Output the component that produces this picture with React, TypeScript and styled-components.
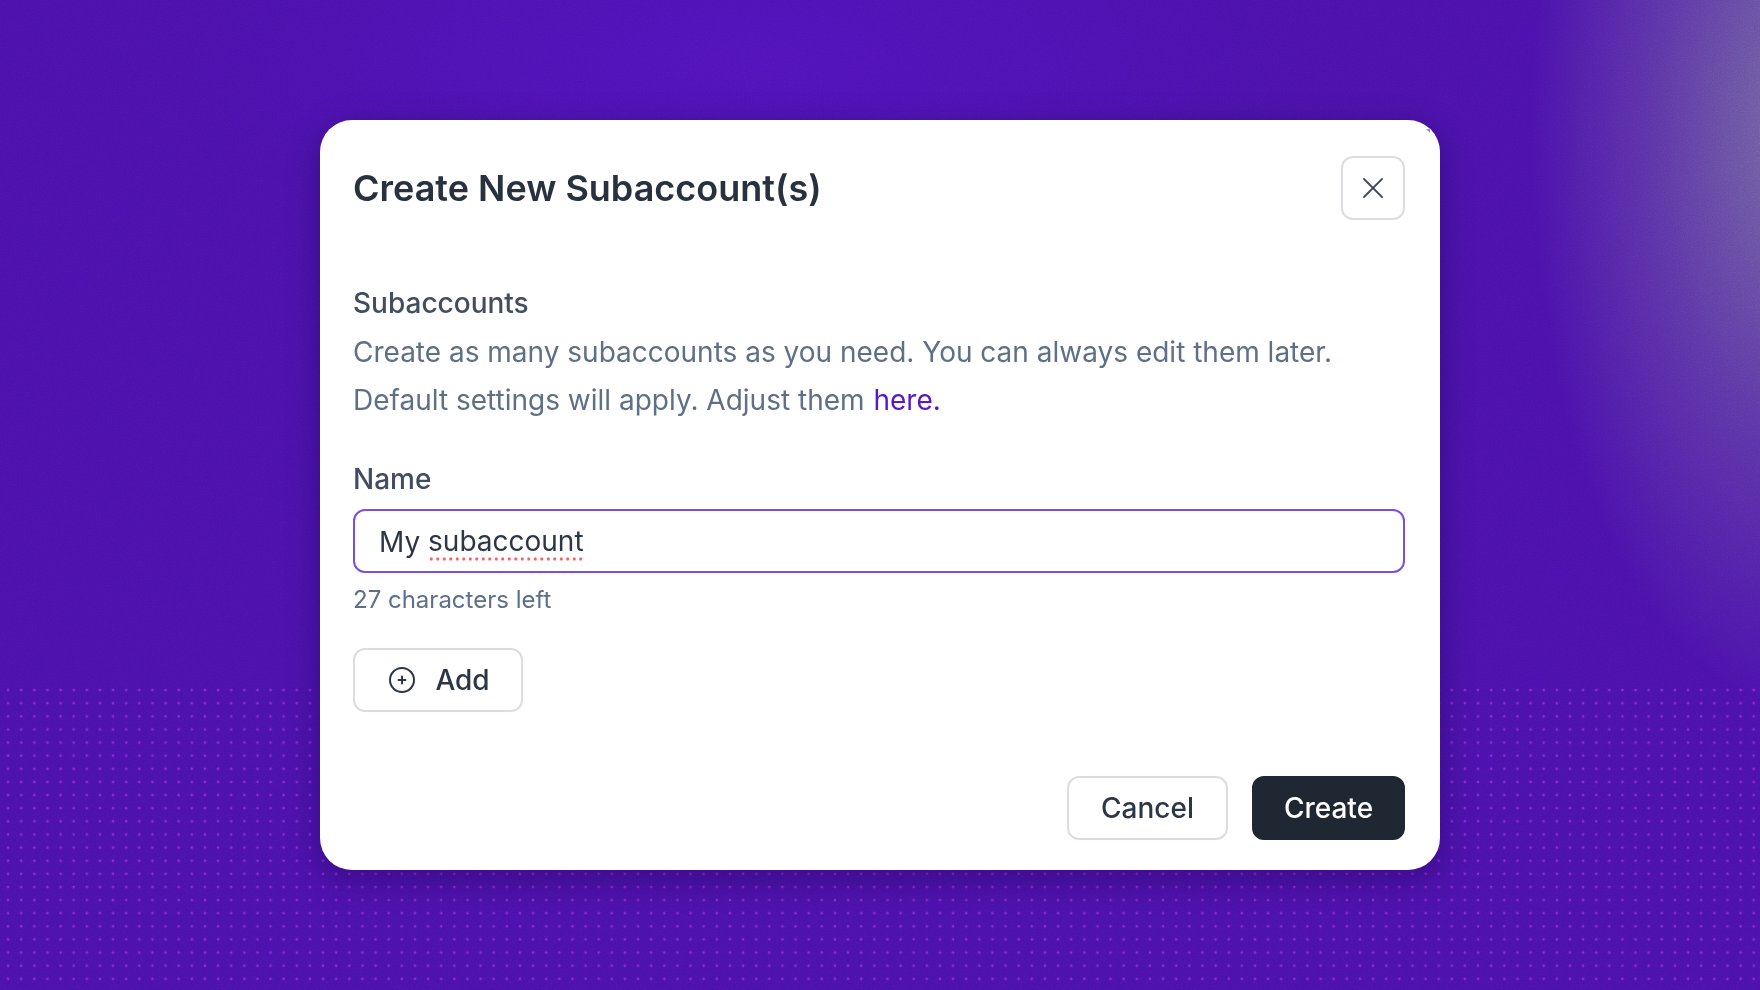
import React from "react";
import styled, { createGlobalStyle } from "styled-components";
import { X } from "lucide-react";

const Global = createGlobalStyle`
  * { box-sizing: border-box; }
  html, body { margin: 0; padding: 0; height: 100%; overflow: hidden; }
  body { font-family: Inter, "Liberation Sans", sans-serif; font-feature-settings: "calt" 1; }
`;

const Page = styled.main`
  position: relative;
  width: 1760px;
  height: 990px;
  overflow: hidden;
  display: flex;
  align-items: center;
  justify-content: center;
  background:
    radial-gradient(ellipse 270px 580px at 1800px 130px, rgba(125, 125, 155, 0.8), rgba(125, 125, 155, 0.32) 55%, rgba(125, 125, 155, 0) 100%),
    radial-gradient(ellipse 560px 200px at 740px 60px, rgba(84, 20, 200, 0.5), rgba(84, 20, 200, 0) 100%),
    #4911a8;
`;

const DotField = styled.div`
  position: absolute;
  left: 0;
  right: 0;
  bottom: 0;
  height: 307px;
  background-image: radial-gradient(circle at 50% 50%, rgba(175, 55, 245, 0.85) 0, rgba(175, 55, 245, 0.45) 1px, rgba(175, 55, 245, 0) 1.8px);
  background-size: 13.14px 13.14px;
  background-position: 1.5px 0.5px;
`;

const Grain = styled.svg`
  position: absolute;
  inset: 0;
  width: 100%;
  height: 100%;
  opacity: 0.32;
  mix-blend-mode: overlay;
  pointer-events: none;
`;

const Modal = styled.section`
  position: relative;
  width: 1120px;
  height: 750px;
  padding: 36px 35px 30px 33px;
  display: flex;
  flex-direction: column;
  background: #ffffff;
  border-radius: 32px;
  box-shadow: 0 8px 32px rgba(25, 5, 70, 0.42);
`;

const CornerMark = styled.span`
  position: absolute;
  top: 9px;
  right: 10px;
  width: 0;
  height: 0;
  border-top: 4px solid #9a9aa4;
  border-left: 4px solid transparent;
`;

const Header = styled.header`
  display: flex;
  align-items: center;
  justify-content: space-between;
  height: 64px;
`;

const Title = styled.h1`
  margin: 0;
  font-size: 36px;
  line-height: 64px;
  font-weight: 600;
  color: #28323f;
`;

const Outlined = styled.button`
  height: 64px;
  display: inline-flex;
  align-items: center;
  justify-content: center;
  background: #ffffff;
  border: 2px solid #dcdde2;
  border-radius: 12px;
  color: #2c3746;
  font: 500 28px/40px Inter, "Liberation Sans", sans-serif;
  padding: 0;
`;

const CloseButton = styled(Outlined)`
  width: 64px;
  color: #3d4a5c;
`;

const SectionLabel = styled.h2`
  margin: 62px 0 5px;
  font-size: 28px;
  line-height: 42px;
  font-weight: 500;
  color: #414e60;
`;

const Description = styled.p`
  margin: 0;
  font-size: 28px;
  line-height: 47.5px;
  font-weight: 400;
  color: #5e6f88;
`;

const HereLink = styled.a`
  color: #5a18c9;
  margin-left: 1px;
  text-decoration: none;
`;

const FieldLabel = styled.label`
  display: block;
  margin: 34px 0 9px;
  font-size: 28px;
  line-height: 42px;
  font-weight: 500;
  color: #414e60;
`;

const NameInput = styled.div`
  height: 64px;
  display: flex;
  align-items: center;
  padding: 2px 24px 0;
  border: 2px solid #7c4fe0;
  border-radius: 12px;
  font-size: 28px;
  font-weight: 400;
  color: #2c3746;
  white-space: pre;
`;

const Misspelled = styled.span`
  padding-bottom: 3px;
  background-image: radial-gradient(circle at 50% 50%, #fb6060 0, #fb6060 1.3px, rgba(251, 96, 96, 0) 1.9px);
  background-size: 6.5px 4px;
  background-repeat: repeat-x;
  background-position: 0 100%;
`;

const Hint = styled.div`
  margin-top: 9px;
  font-size: 24px;
  line-height: 36px;
  color: #5e6f88;
`;

const AddButton = styled(Outlined)`
  align-self: flex-start;
  margin-top: 30px;
  width: 170px;
  gap: 20px;
  padding-left: 3px;
`;

const Footer = styled.footer`
  margin-top: auto;
  display: flex;
  justify-content: flex-end;
  gap: 24px;
`;

const CancelButton = styled(Outlined)`
  width: 161px;
`;

const CreateButton = styled(Outlined)`
  width: 153px;
  background: #1f2733;
  border-color: #1f2733;
  color: #ffffff;
`;

const PlusCircle = () => (
  <svg width="26" height="26" viewBox="0 0 26 26" fill="none" stroke="currentColor" strokeWidth="2" strokeLinecap="round" aria-hidden="true">
    <circle cx="13" cy="13" r="12" />
    <path d="M13 9.5v7M9.5 13h7" />
  </svg>
);

export default function App() {
  return (
    <Page>
      <Global />
      <DotField />
      <Grain aria-hidden="true">
        <filter id="grain">
          <feTurbulence type="fractalNoise" baseFrequency="0.8" numOctaves="2" stitchTiles="stitch" />
          <feColorMatrix type="saturate" values="0" />
        </filter>
        <rect width="100%" height="100%" filter="url(#grain)" />
      </Grain>
      <Modal>
        <CornerMark />
        <Header>
          <Title>Create New Subaccount(s)</Title>
          <CloseButton aria-label="Close">
            <X size={36} strokeWidth={1.2} />
          </CloseButton>
        </Header>
        <SectionLabel>Subaccounts</SectionLabel>
        <Description>
          Create as many subaccounts as you need. You can always edit them later.
          <br />
          Default settings will apply. Adjust them <HereLink href="#">here.</HereLink>
        </Description>
        <FieldLabel>Name</FieldLabel>
        <NameInput>
          My <Misspelled>subaccount</Misspelled>
        </NameInput>
        <Hint>27 characters left</Hint>
        <AddButton>
          <PlusCircle />
          Add
        </AddButton>
        <Footer>
          <CancelButton>Cancel</CancelButton>
          <CreateButton>Create</CreateButton>
        </Footer>
      </Modal>
    </Page>
  );
}
